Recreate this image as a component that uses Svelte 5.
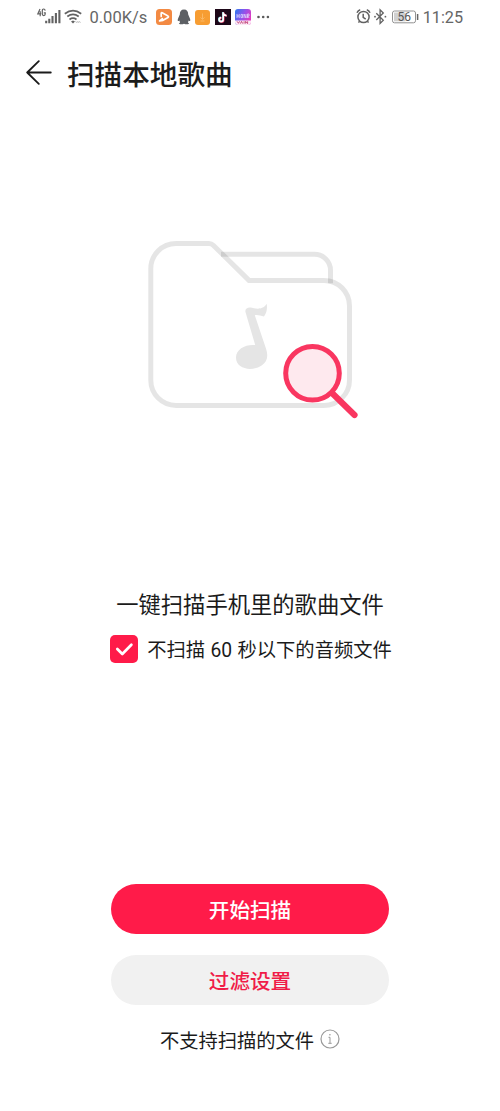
<script>
  let skipShort = $state(true);
</script>

<main class="screen">
  <div class="status">
    <svg class="signal" width="46" height="18" viewBox="0 0 46 18">
      <g fill="none" stroke="#626262" stroke-width="1.2">
        <path d="M4 1 1.800 5.800h3.400M4.200 3.300v4.900M9.200 2.700Q8.900 1 7.700 1 6.300 1 6.300 2.800v3Q6.300 7.600 7.800 7.600q1.400 0 1.400-1.500V4.800H7.800" />
        <path d="M10.200 15.200v-2.400M13.300 15.200v-4.500M16.500 15.200V8M19.900 15.200V5M23.400 15.200V2" stroke-width="2.100" />
        <path d="M28.800 5.700q8.200-6.100 16.400 0M31.300 8.500q5.700-4.200 11.400 0M33.500 11.500q3.500-2.600 7 0" stroke-width="1.700" />
      </g>
      <path d="m35 13.400 2-1 2 1-2 2.200z" fill="#626262" />
      <path d="m39.500 13 1.200 2 1.200-2M42.300 15l1-2 1.200 2" fill="none" stroke="#ccc" />
    </svg>
    <span class="speed">0.00K/s</span>
    <div class="apps">
      <svg width="16" height="16" viewBox="0 0 16 16">
        <rect width="16" height="16" rx="3.5" fill="#f38a43" />
        <path d="M5.200 7.500V4.300q0-1 1-.5l5.800 3.300q1 .7 0 1.300L7 11.300l-3.400.7 2.800-2.400" fill="none" stroke="#fff" stroke-width="1.700" stroke-linecap="round" stroke-linejoin="round" />
      </svg>
      <svg width="14" height="16" viewBox="0 0 14 16">
        <path d="M7 .6c-3 0-4.300 2-4.200 5L1.200 9.300C.3 11.500.6 13 2.400 11.400l.6 2-1.200 1.300q2.600 1 5.200 0 2.600 1 5.200 0L11 13.400l.6-2c1.800 1.600 2.100.1 1.200-2.100l-1.600-3.700C11.300 2.600 10 .6 7 .6z" fill="#5d6064" />
      </svg>
      <svg width="15" height="15" viewBox="0 0 15 15">
        <rect width="15" height="15" rx="3" fill="#f79d32" />
        <path d="M7.500 3.500v5.800M5.500 7.500l2 1.800 2-1.800M5.500 11h4" stroke="#fbb965" fill="none" />
      </svg>
      <svg width="16" height="16" viewBox="0 0 16 16">
        <rect width="16" height="16" fill="#1d0718" />
        <g fill="none" stroke-width="1.700">
          <path d="M7.800 3v7.400a2 2 0 1 1-2-2M7.800 4q.9 2.300 3.300 2.400" stroke="#55c5cc" />
          <path d="M8.700 3.500v7.400a2 2 0 1 1-2-2M8.700 4.500q.9 2.300 3.300 2.400" stroke="#e93562" />
          <path d="M8.200 3.200v7.400a2 2 0 1 1-2-2M8.200 4.200q.9 2.300 3.300 2.400" stroke="#fff" />
        </g>
      </svg>
      <svg width="16" height="16" viewBox="0 0 16 16">
        <defs>
          <linearGradient id="honor" x2="1" y2=".5">
            <stop stop-color="#2979ee" /><stop offset=".55" stop-color="#9152ec" /><stop offset="1" stop-color="#e13ac0" />
          </linearGradient>
        </defs>
        <rect width="16" height="16" rx="3" fill="url(#honor)" />
        <path d="M2 5v4M4.200 5v4M2 7h2M6 5.400v3.200h1.500V5.400zM9 9V5l2 4V5M12.500 9V5H14v2h-1.500l1.700 2" fill="none" stroke="#ded9ff" stroke-width=".8" />
        <path d="M0 11.500h16V13q0 3-3 3H3q-3 0-3-3z" fill="#fce9f5" />
        <path d="m2 12.300 1.500 2 1-2m1 2.300 1-2.300 1.200 2.300m1.400-2.300v2.300m1.500 0v-2.300l2 2.300v-2.300" stroke="#c24278" fill="none" stroke-width=".9" />
      </svg>
    </div>
    <svg class="more" width="14" height="4" viewBox="0 0 14 4" fill="#5b5b5b">
      <circle cx="1.500" cy="2" r="1.300" /><circle cx="6.200" cy="2" r="1.300" /><circle cx="10.900" cy="2" r="1.300" />
    </svg>
    <svg class="system" width="63" height="18" viewBox="0 0 63 18">
      <g fill="none" stroke="#626262" stroke-width="1.500">
        <circle cx="7.500" cy="9" r="5.600" />
        <path d="M7.200 5.700v3.700l2.500 1.800M1 4.700q1-2.400 3.200-3M14 4.700q-1-2.400-3.200-3M3.500 13.300l-1 1.300M11.500 13.300l1 1.300" />
        <path d="m20.300 5.200 7 7-3.200 3.200V1.800L27.300 5l-7 7" stroke-width="1.300" />
      </g>
      <circle cx="19" cy="8.700" r=".9" fill="#626262" /><circle cx="29.400" cy="8.700" r=".9" fill="#626262" />
      <rect x="36.500" y="3" width="23" height="11.800" rx="2" fill="#fff" stroke="#929292" />
      <path d="M38 4.500h11.500v8.800H38z" fill="#d0d0d0" />
      <path d="M61.600 6v6" stroke="#666" stroke-width="1.500" />
      <text x="48.200" y="13.200" text-anchor="middle" class="charge">56</text>
    </svg>
    <span class="clock">11:25</span>
  </div>

  <header>
    <svg width="26" height="26" viewBox="0 0 26 26" fill="none" stroke="#1b1b1b" stroke-width="1.800" stroke-linecap="round" stroke-linejoin="round">
      <path d="M12.800 1.200 1.200 12.500l11.600 11.400M1.200 12.500h23.600" />
    </svg>
    <h1>扫描本地歌曲</h1>
  </header>

  <svg class="art" width="220" height="195" viewBox="0 0 220 195" fill="none">
    <g stroke="#000" stroke-opacity=".1" stroke-width="5">
      <path d="M81 24.300h93.500a16 16 0 0 1 16 16v13" />
      <path d="M36 13.500h33q2.600 0 4.500 1.900l35.500 35h75a25.500 25.500 0 0 1 25.500 25.500v74a25.500 25.500 0 0 1-25.500 25.500H36A25.200 25.200 0 0 1 10.800 150.200V38.700A25.200 25.200 0 0 1 36 13.500z" />
    </g>
    <path d="M105.600 82.500c-1.200-3.800 2.200-5.700 6.400-4.700 4.500 1.300 11.500 2 14.700-4 .7 5.200 0 9.200-2.700 12.600-3.500-.5-6.500-2-9.200-1.100l11.400 34c2.400 8 .6 12.500-4.600 16.200-9.300 6.300-25.600 4-25.600-7.900 0-8.600 9.500-13.400 19.200-12.500z" fill="#e5e5e5" />
    <path d="m192 163 22.500 22" stroke="#f93660" stroke-width="6.200" stroke-linecap="round" />
    <circle cx="172.500" cy="143.200" r="26.800" fill="#fee9ee" stroke="#f93660" stroke-width="5" />
  </svg>

  <h2>一键扫描手机里的歌曲文件</h2>
  <label class="option">
    <input type="checkbox" bind:checked={skipShort} />
    <svg width="28" height="28" viewBox="0 0 28 28">
      <rect width="28" height="28" rx="5" fill={skipShort ? '#ff1b49' : '#d0d0d0'} />
      {#if skipShort}
        <path d="m7.300 14 5 5L21.400 9.700" fill="none" stroke="#fff" stroke-width="2.700" stroke-linecap="round" stroke-linejoin="round" />
      {/if}
    </svg>
    <span>不扫描 60 秒以下的音频文件</span>
  </label>

  <div class="actions">
    <button class="primary">开始扫描</button>
    <button>过滤设置</button>
  </div>

  <div class="unsupported">
    <span>不支持扫描的文件</span>
    <svg width="20" height="20" viewBox="0 0 20 20" fill="none" stroke="#999">
      <circle cx="10" cy="10" r="9" stroke-width="1.200" />
      <path d="M8.500 8.300H10v6M8.300 14.300h3.400" />
      <circle cx="9.900" cy="5.700" r=".8" fill="#999" stroke="none" />
    </svg>
  </div>
</main>

<style>
  :global(body) {
    margin: 0;
    background: #fff;
  }
  .screen {
    box-sizing: border-box;
    width: 500px;
    height: 1111px;
    display: flex;
    flex-direction: column;
    align-items: center;
    overflow: hidden;
    background: #fff;
    color: #1b1b1b;
    font-family: Roboto, "Noto Sans CJK SC", sans-serif;
  }
  svg {
    display: block;
    flex: none;
  }
  .status {
    box-sizing: border-box;
    width: 100%;
    height: 34px;
    padding: 0 37px 0 36px;
    display: flex;
    align-items: center;
    color: #666;
    font-size: 16.500px;
    line-height: 34px;
  }
  .speed {
    width: 60px;
    margin-left: 7.500px;
    padding-top: 1px;
  }
  .apps {
    display: flex;
    align-items: center;
    gap: 4.500px;
    margin-left: 6.500px;
  }
  .more {
    margin-left: 6px;
  }
  .system {
    margin-left: auto;
    margin-right: 4px;
  }
  .charge {
    fill: #555;
    font: 12px Roboto, sans-serif;
  }
  .clock {
    font-size: 16.200px;
    padding-top: 1px;
  }
  header {
    box-sizing: border-box;
    width: 100%;
    height: 78px;
    padding-left: 26px;
    display: flex;
    align-items: center;
    gap: 15px;
  }
  h1,
  h2 {
    margin: 0;
    white-space: nowrap;
  }
  h1 {
    padding-top: 6px;
    font-size: 27.600px;
    font-weight: 500;
    line-height: 40px;
  }
  .art {
    margin-top: 118px;
  }
  h2 {
    margin-top: 163px;
    height: 34px;
    font-size: 22.300px;
    font-weight: 400;
    line-height: 34px;
  }
  .option {
    display: flex;
    align-items: center;
    gap: 9px;
    height: 28px;
    margin-top: 13px;
    padding-left: 2px;
    font-size: 19.300px;
    line-height: 28px;
    white-space: nowrap;
    word-spacing: 0.600px;
  }
  .option span {
    padding-top: 4px;
  }
  input {
    appearance: none;
    width: 0;
    height: 0;
    margin: 0 -9px 0 0;
  }
  .actions {
    display: flex;
    flex-direction: column;
    gap: 21px;
    margin-top: 221px;
  }
  button {
    width: 278px;
    height: 50px;
    padding: 4px 0 0;
    border: 0;
    border-radius: 25px;
    background: #f1f1f1;
    color: #f01c48;
    font: 500 20.600px/46px Roboto, "Noto Sans CJK SC", sans-serif;
  }
  .primary {
    background: #ff1b49;
    color: #fff;
  }
  .unsupported {
    display: flex;
    align-items: center;
    gap: 6px;
    height: 30px;
    margin-top: 19px;
    font-size: 19.300px;
  }
  .unsupported span {
    padding-top: 2px;
  }
</style>
